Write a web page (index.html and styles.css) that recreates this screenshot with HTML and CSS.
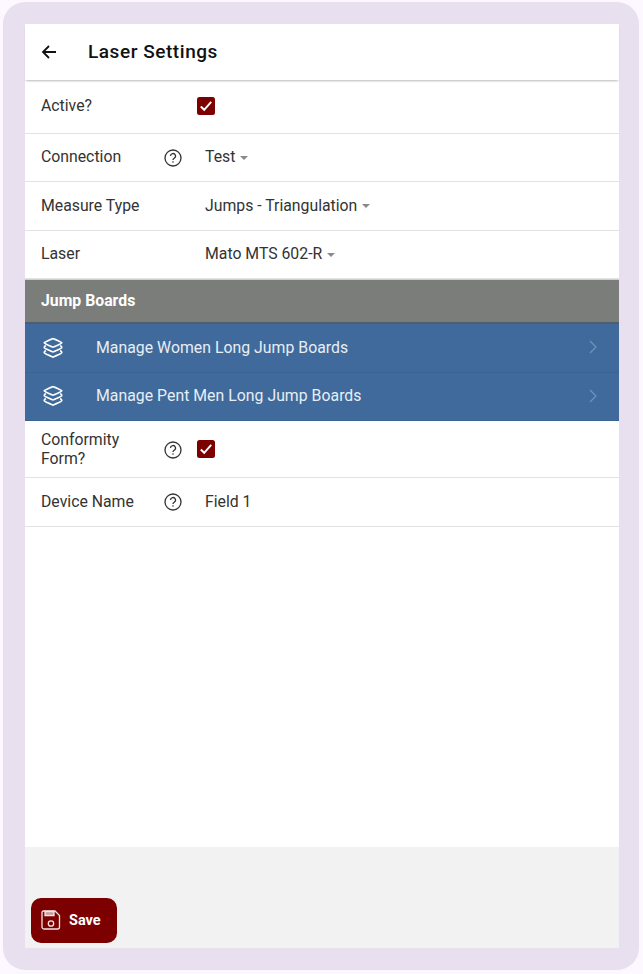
FILE: index.html
```html
<!DOCTYPE html>
<html lang="en">
<head>
<meta charset="utf-8">
<title>Laser Settings</title>
<link rel="stylesheet" href="styles.css">
</head>
<body>
<div class="frame">
  <div class="screen">
    <header class="toolbar">
      <svg class="back" viewBox="0 0 16 16" width="16" height="16"><path d="M15 8H2M8 2L2 8l6 6" fill="none" stroke="#111" stroke-width="1.8"/></svg>
      <h1 class="title">Laser Settings</h1>
    </header>
    <main class="content">
      <div class="row row-active">
        <span class="label">Active?</span><span class="help"></span>
        <span class="check check-first"><svg viewBox="0 0 18 18" width="18" height="18"><path d="M3.800 9.500l3.400 3.300 7-8" fill="none" stroke="#fff" stroke-width="1.900"/></svg></span>
      </div>
      <div class="row row-48">
        <span class="label">Connection</span>
        <span class="help"><svg viewBox="0 0 18 18" width="18" height="18"><circle cx="9" cy="9" r="8" fill="none" stroke="#333" stroke-width="1.3"/><path d="M6.500 7a2.500 2.500 0 1 1 3.700 2.200C9.300 9.800 9 10.200 9 11" fill="none" stroke="#333" stroke-width="1.3"/><circle cx="9" cy="13" r=".8" fill="#333"/></svg></span>
        <span class="value">Test</span><span class="caret"></span>
      </div>
      <div class="row row-49">
        <span class="label">Measure Type</span><span class="help"></span>
        <span class="value">Jumps - Triangulation</span><span class="caret"></span>
      </div>
      <div class="row row-48">
        <span class="label">Laser</span><span class="help"></span>
        <span class="value">Mato MTS 602-R</span><span class="caret"></span>
      </div>
      <div class="group">Jump Boards</div>
      <a class="nav nav-first">
        <svg class="layers" viewBox="0 0 20 20" width="22" height="22"><path d="M10 1.500c.4 0 7.800 3.200 8 3.800.2.700-7.400 3.900-8 3.900s-8.200-3.200-8-3.900c.2-.6 7.600-3.800 8-3.800zM3.500 7.800C2.400 8.400 2 9 2 9.700c.1.700 7.400 3.900 8 3.900s7.900-3.200 8-3.900c0-.7-.4-1.300-1.500-1.900M3.500 12.200C2.400 12.800 2 13.400 2 14.100c.1.700 7.400 4.200 8 4.200s7.900-3.500 8-4.200c0-.7-.4-1.300-1.500-1.900" fill="none" stroke="#fff" stroke-width="1.500" stroke-linejoin="round"/></svg>
        <span class="nav-text">Manage Women Long Jump Boards</span>
        <svg class="chev" viewBox="0 0 10 16" width="10" height="16"><path d="M2 2l6 6-6 6" fill="none" stroke="#6d92bc" stroke-width="1.300"/></svg>
      </a>
      <a class="nav">
        <svg class="layers" viewBox="0 0 20 20" width="22" height="22"><path d="M10 1.500c.4 0 7.800 3.200 8 3.800.2.700-7.400 3.900-8 3.900s-8.200-3.200-8-3.900c.2-.6 7.600-3.800 8-3.800zM3.500 7.800C2.400 8.400 2 9 2 9.700c.1.700 7.400 3.900 8 3.900s7.900-3.200 8-3.900c0-.7-.4-1.300-1.500-1.900M3.500 12.200C2.400 12.800 2 13.400 2 14.100c.1.700 7.400 4.200 8 4.200s7.900-3.500 8-4.200c0-.7-.4-1.300-1.500-1.900" fill="none" stroke="#fff" stroke-width="1.500" stroke-linejoin="round"/></svg>
        <span class="nav-text">Manage Pent Men Long Jump Boards</span>
        <svg class="chev" viewBox="0 0 10 16" width="10" height="16"><path d="M2 2l6 6-6 6" fill="none" stroke="#6d92bc" stroke-width="1.300"/></svg>
      </a>
      <div class="row row-conf">
        <span class="label label-wrap">Conformity Form?</span>
        <span class="help"><svg viewBox="0 0 18 18" width="18" height="18"><circle cx="9" cy="9" r="8" fill="none" stroke="#333" stroke-width="1.3"/><path d="M6.500 7a2.500 2.500 0 1 1 3.700 2.200C9.300 9.800 9 10.200 9 11" fill="none" stroke="#333" stroke-width="1.3"/><circle cx="9" cy="13" r=".8" fill="#333"/></svg></span>
        <span class="check"><svg viewBox="0 0 18 18" width="18" height="18"><path d="M3.800 9.500l3.400 3.300 7-8" fill="none" stroke="#fff" stroke-width="1.900"/></svg></span>
      </div>
      <div class="row row-49">
        <span class="label">Device Name</span>
        <span class="help"><svg viewBox="0 0 18 18" width="18" height="18"><circle cx="9" cy="9" r="8" fill="none" stroke="#333" stroke-width="1.3"/><path d="M6.500 7a2.500 2.500 0 1 1 3.700 2.200C9.300 9.800 9 10.200 9 11" fill="none" stroke="#333" stroke-width="1.3"/><circle cx="9" cy="13" r=".8" fill="#333"/></svg></span>
        <span class="value">Field 1</span>
      </div>
    </main>
    <footer class="footer">
      <button class="save" type="button">
        <svg viewBox="0 0 20 20" width="20" height="20"><path d="M2.500 1h11.500l4.500 4.500V17a2 2 0 0 1-2 2H3a2 2 0 0 1-2-2V2.500A1.500 1.500 0 0 1 2.500 1z" fill="none" stroke="#f3e4e4" stroke-width="1.300"/><path d="M4 1.500h9v4H4z" fill="#c79b9b" stroke="#f3e4e4" stroke-width="1.300"/><circle cx="10" cy="13.500" r="2.700" fill="none" stroke="#f3e4e4" stroke-width="1.300"/></svg>
        <span>Save</span>
      </button>
    </footer>
  </div>
</div>
</body>
</html>
```
FILE: styles.css
```css
* { box-sizing: border-box; }
html, body { height: 100%; }
body {
  margin: 0;
  padding: 2px 4px 4px 3px;
  background: #fdf8ff;
  font-family: Roboto, "Liberation Sans", sans-serif;
  color: #222;
}
.frame {
  height: 968px;
  padding: 22px 20px 22px 22px;
  background: #e8e0ef;
  border-radius: 22px;
}
.screen {
  height: 924px;
  display: flex;
  flex-direction: column;
  background: #f2f2f2;
}
.toolbar {
  position: relative;
  z-index: 1;
  height: 56px;
  display: flex;
  align-items: center;
  padding: 0 0 1px 16px;
  background: #fff;
  box-shadow: 0 2px 2px -1px rgba(0, 0, 0, .28);
}
.back { flex: none; }
.title {
  margin: 0 0 1px 31px;
  font-size: 19px;
  font-weight: 500;
  letter-spacing: .55px;
  color: #111;
}
.content {
  height: 767px;
  background: #fff;
  display: flex;
  flex-direction: column;
}
.row {
  display: flex;
  align-items: center;
  padding-left: 16px;
  background: #fff;
  border-bottom: 1px solid #e2e2e2;
  font-size: 15.800px;
}
.row-active { height: 54px; padding-bottom: 3px; }
.row-48 { height: 48px; padding-bottom: 2px; }
.row-49 { height: 49px; padding-bottom: 2px; }
.row-conf { height: 57px; }
.label { width: 123px; flex: none; color: #333; }
.label-wrap { line-height: 19px; }
.help { width: 18px; height: 18px; flex: none; margin-right: 23px; }
.help svg, .check svg { display: block; }
.row > .help svg { margin-top: 1px; }
.value { color: #333; }
.caret {
  width: 0;
  height: 0;
  margin: 2px 0 0 5px;
  border: 4.500px solid transparent;
  border-top: 4.500px solid #8a8a8a;
  border-bottom: 0;
}
.check {
  width: 18px;
  height: 18px;
  margin-left: -8px;
  background: #7c0000;
  border-radius: 2.500px;
}
.check-first { margin-top: 2px; }
.group {
  height: 45px;
  display: flex;
  align-items: center;
  padding: 0 0 2px 16px;
  background: #7b7d7b;
  border-top: 1px solid #cfcfcf;
  border-bottom: 2px solid #4f5e6c;
  color: #fff;
  font-size: 15.800px;
  font-weight: 700;
}
.nav {
  height: 48px;
  display: flex;
  align-items: center;
  padding: 0 21px 2px 17px;
  background: #3f6a9b;
  border-bottom: 1px solid #3b6591;
  color: #e8eef5;
  font-size: 15.800px;
  letter-spacing: .03px;
}
.nav-first { height: 49px; }
.layers { flex: none; margin-top: 1px; }
.nav-text { flex: 1; margin-left: 32px; }
.chev { flex: none; }
.footer {
  flex: 1;
  display: flex;
  align-items: flex-end;
  padding: 0 0 5px 6px;
}
.save {
  width: 86px;
  height: 45px;
  display: flex;
  align-items: center;
  gap: 8px;
  padding: 0 0 1px 10px;
  border: 0;
  border-radius: 10px;
  background: #7c0000;
  color: #fff;
  font: 700 14.500px Roboto, "Liberation Sans", sans-serif;
}
```
